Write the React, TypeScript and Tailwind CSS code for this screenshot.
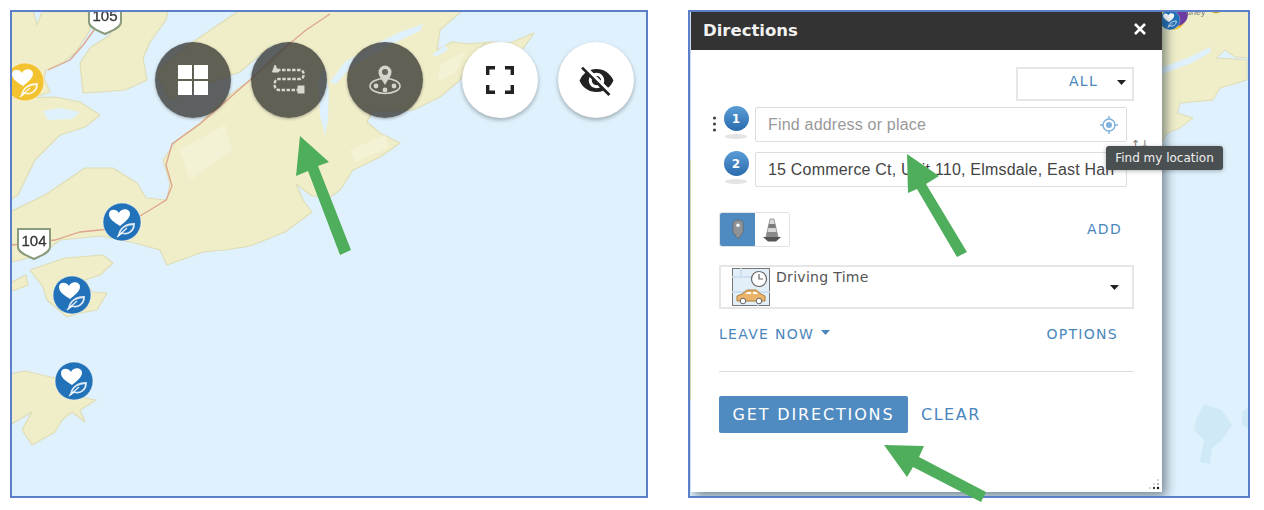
import { MdVisibilityOff } from "react-icons/md";

const LAND = "#f0eec9";
const COAST = "#dfddb6";
const WATER = "#dff1fc";

function Marker({ x, y, r = 19, fill = "#2272b9" }: { x: number; y: number; r?: number; fill?: string }) {
  return (
    <g transform={`translate(${x} ${y}) scale(${r / 19})`}>
      <circle r="19" fill={fill} stroke="#ffffff" strokeOpacity="0.5" strokeWidth="1" />
      <path d="M-2 4 C-8 0 -13 -3 -13 -8 C-13 -13 -6 -14 -3 -9 C-1 -14 8 -14 8 -8 C8 -4 3 0 -2 4 Z" fill="#ffffff" />
      <path d="M-3 13 C-2 6 4 2 12 2 C12 9 6 13 0 11 Z" fill="none" stroke="#ffffff" strokeOpacity="0.85" strokeWidth="1.8" />
      <path d="M-5 15 L5 6" stroke="#ffffff" strokeOpacity="0.85" strokeWidth="1.4" />
    </g>
  );
}

function Shield({ x, y, label }: { x: number; y: number; label: string }) {
  return (
    <g transform={`translate(${x} ${y})`}>
      <path d="M0 2 H32 V20 C32 26 22 29 16 32 C10 29 0 26 0 20 Z" fill="#ffffff" stroke="#8b9b7d" strokeWidth="2" />
      <text x="16" y="19" textAnchor="middle" fontSize="15" fontFamily="Liberation Sans, sans-serif" fill="#333333" stroke="#333333" strokeWidth="0.3">
        {label}
      </text>
    </g>
  );
}

function LeftMap() {
  return (
    <svg viewBox="12 12 634 484" className="absolute inset-0 h-full w-full blur-[0.7px]">
      <rect x="12" y="12" width="634" height="484" fill={WATER} />
      <g fill={LAND} stroke={COAST} strokeWidth="1.2" strokeLinejoin="round">
        <path d="M0 0 H30 L37 25 L42 12 H88 L90 30 L76 52 L64 62 L46 70 L44 78 L50 92 L32 98 L10 100 Z" />
        <path d="M120 10 H168 L166 20 L150 42 L143 58 L147 80 L125 90 L100 92 L83 93 L80 63 L90 48 L110 35 Z" />
        <path d="M10 98 L55 97 L80 102 L100 115 L85 127 L60 135 L35 160 L18 195 L10 200 Z" />
        <path d="M10 212 L45 195 L85 168 L113 168 L137 183 L146 198 L167 200 L170 183 L163 160 L177 140 L200 123 L227 97 L250 80 L276 58 L290 42 L270 46 L240 72 L205 84 L170 100 L160 80 L158 70 L190 44 L240 10 H463 L440 30 L437 50 L452 42 L470 44 L490 42 L510 43 L534 33 L522 50 L484 44 L470 60 L460 80 L440 97 L413 110 L395 111 L372 112 L367 122 L380 133 L400 143 L380 157 L353 170 L340 190 L330 197 L312 196 L296 184 L303 200 L312 212 L285 232 L250 246 L225 250 L203 252 L167 265 L160 250 L135 243 L100 236 L60 240 L40 255 L12 262 Z" />
        <path d="M30 270 L65 258 L103 255 L113 263 L100 275 L85 280 L92 292 L107 293 L97 310 L80 313 L67 317 L47 300 L43 287 Z" />
        <path d="M10 374 L25 371 L55 378 L73 381 L85 398 L96 400 L80 410 L85 422 L72 412 L62 420 L55 432 L32 445 L22 430 L32 412 L10 425 Z" />
        <path d="M10 283 L26 275 L28 285 L10 292 Z" />
      </g>
      <g fill={WATER} stroke="none">
        <path d="M43 111 L60 108 L80 112 L72 119 L48 120 Z" />
        <path d="M318 80 L325 68 L329 90 L328 120 L325 136 L320 115 Z" />
        <path d="M330 82 L345 62 L372 46 L400 32 L423 24 L420 31 L396 42 L375 54 L350 68 L336 84 Z" />
        <path d="M432 55 L445 45 L448 50 L437 56 Z" />
      </g>
      <g fill="#f4f2d4" stroke="none">
        <path d="M180 150 L225 125 L232 150 L190 180 Z" />
        <path d="M350 150 L385 135 L388 148 L355 162 Z" />
        <path d="M440 65 L465 52 L456 72 L438 82 Z" />
      </g>
      <path
        d="M94 30 L84 44 L70 60 L48 70 M330 14 L306 30 L282 50 L250 80 L200 124 L172 144 L166 165 L172 186 L166 200 L150 210 L120 228 L80 232 L55 240 L12 245"
        fill="none"
        stroke="#dda58c"
        strokeWidth="1.3"
      />
      <Marker x={25} y={82} fill="#f3c22f" />
      <Marker x={122} y={222} />
      <Marker x={72} y={295} />
      <Marker x={74} y={381} />
      <Shield x={89} y={2} label="105" />
      <Shield x={18} y={227} label="104" />
    </svg>
  );
}

function RightMap() {
  return (
    <svg viewBox="690 12 558 484" className="absolute inset-0 h-full w-full blur-[0.7px]">
      <rect x="690" y="12" width="558" height="484" fill={WATER} />
      <path d="M690 160 H692 V400 H690 Z" fill={LAND} />
      <path
        d="M1155 10 H1250 V58 L1235 57 L1225 50 L1216 58 L1247 60 L1247 80 L1220 88 L1213 100 L1180 103 L1177 113 L1193 118 L1180 128 L1167 133 L1160 145 Z"
        fill={LAND}
        stroke={COAST}
        strokeLinejoin="round"
      />
      <path d="M1160 68 L1190 57 L1210 47 L1211 52 L1192 63 L1162 74 Z" fill={WATER} />
      <path d="M1196 420 L1204 404 L1222 410 L1232 425 L1222 440 L1212 448 L1210 464 L1200 462 L1204 440 L1194 430 Z" fill="#cfe9f6" />
      <path d="M1242 412 L1250 406 V430 L1242 425 Z" fill="#cfe9f6" />
      <circle cx="1172" cy="16" r="14" fill="#f3c22f" />
      <circle cx="1176" cy="14" r="12" fill="#6d3aa0" />
      <Marker x={1170} y={20} r={10} />
      <circle cx="1216" cy="4" r="9" fill="#2272b9" stroke="#f3c22f" />
      <text x="1186" y="15" fontSize="9" fontFamily="Liberation Sans, sans-serif" fill="#777777">
        dney
      </text>
    </svg>
  );
}

function GridIcon() {
  return (
    <div className="grid grid-cols-2 gap-[2px]">
      <div className="h-[14px] w-[14px] bg-white" />
      <div className="h-[14px] w-[14px] bg-white" />
      <div className="h-[14px] w-[14px] bg-white" />
      <div className="h-[14px] w-[14px] bg-white" />
    </div>
  );
}

function RouteIcon() {
  return (
    <svg width="34" height="30" viewBox="0 0 34 30" fill="none" stroke="#d9d8d0" strokeWidth="2.4" strokeDasharray="3.5 1.5">
      <path d="M5 5 H28 C33 5 33 14 28 14 H7 C1 14 1 25 7 25 H27" />
      <path d="M3 0 L6.5 7 H0.5 Z" fill="#d9d8d0" strokeDasharray="none" strokeWidth="1" />
      <rect x="26" y="21" width="6" height="7" fill="#d9d8d0" strokeDasharray="none" strokeWidth="1" />
    </svg>
  );
}

function NearbyIcon() {
  return (
    <svg width="34" height="30" viewBox="0 0 34 30" fill="none" stroke="#d5d4cc" strokeWidth="1.6">
      <ellipse cx="17" cy="21" rx="15" ry="7.5" />
      <path d="M17 20 C13 13 10.5 11 10.5 7 A6.5 6.5 0 0 1 23.5 7 C23.5 11 21 13 17 20 Z" fill="#d5d4cc" stroke="none" />
      <circle cx="17" cy="7" r="3" fill="#66665a" stroke="none" />
      <circle cx="8" cy="21" r="1.6" fill="#d5d4cc" />
      <circle cx="17" cy="25" r="1.6" fill="#d5d4cc" />
      <circle cx="26" cy="21" r="1.6" fill="#d5d4cc" />
    </svg>
  );
}

function FullscreenIcon() {
  return (
    <svg width="28" height="28" viewBox="0 0 28 28" fill="none" stroke="#222222" strokeWidth="3.4">
      <path d="M1.7 9 V1.7 H9 M19 1.7 H26.3 V9 M1.7 19 V26.3 H9 M19 26.3 H26.3 V19" />
    </svg>
  );
}

function MapButtons() {
  const dark = "flex h-[76px] w-[76px] items-center justify-center rounded-full bg-[#3c3c38]/80 shadow-[0_1px_3px_rgba(0,0,0,0.3)]";
  const light = "flex h-[76px] w-[76px] items-center justify-center rounded-full bg-white shadow-[0_2px_4px_rgba(0,0,0,0.3)]";
  return (
    <div className="absolute left-[143px] top-[30px] flex gap-[20px]">
      <div className={dark}>
        <GridIcon />
      </div>
      <div className={dark}>
        <RouteIcon />
      </div>
      <div className={dark}>
        <NearbyIcon />
      </div>
      <div className={`${light} ml-[19px]`}>
        <FullscreenIcon />
      </div>
      <div className={light}>
        <MdVisibilityOff size={37} color="#222222" />
      </div>
    </div>
  );
}

function StopBadge({ n }: { n: number }) {
  return (
    <div className="mt-[-1px] flex flex-col items-center">
      <div className="flex h-[25px] w-[25px] items-center justify-center rounded-full bg-gradient-to-b from-[#5a9dd6] to-[#2a6cad] font-['DejaVu_Sans',sans-serif] text-[12px] font-bold text-white">
        {n}
      </div>
      <div className="mt-[3px] h-[5px] w-[22px] rounded-[50%] bg-[#e4e4e4]" />
    </div>
  );
}

function PinIcon() {
  return (
    <svg width="12" height="21" viewBox="0 0 14 24">
      <path d="M7 23 L1 15 V6 C1 2 4 1 7 1 C10 1 13 2 13 6 V15 Z" fill="#8f9396" stroke="#63686c" />
      <circle cx="7" cy="7" r="2" fill="#ffffff" />
    </svg>
  );
}

function ConeIcon() {
  return (
    <svg width="20" height="24" viewBox="0 0 20 24">
      <path d="M8 1 H12 L16 19 H4 Z" fill="#d8d8d8" stroke="#8a8a8a" strokeWidth="0.8" />
      <path d="M7 6 H13 L14 10 H6 Z" fill="#7a7a7a" />
      <path d="M5.2 14 H14.8 L16 19 H4 Z" fill="#8a8a8a" />
      <path d="M1 19 H19 L14 23.5 H6 Z" fill="#555555" />
    </svg>
  );
}

function DrivingIcon() {
  return (
    <svg width="38" height="38" viewBox="0 0 38 38">
      <rect x="0.5" y="0.5" width="37" height="37" fill="#e2eff9" stroke="#777777" />
      <path d="M0 9 H20 M9 0 V9 M0 24 H38 M26 24 V38" stroke="#c5dcee" strokeWidth="1.5" />
      <circle cx="27" cy="11" r="7.5" fill="#ffffff" stroke="#666666" strokeWidth="1.2" />
      <path d="M27 6 V11 H31" fill="none" stroke="#666666" strokeWidth="1.2" />
      <path d="M5 33 V28 L10 26 L15 22 H24 L29 26 L33 28 V33 Z" fill="#eab56a" stroke="#b07f3e" />
      <path d="M16 24 H19 V26 H13 Z M21 24 H24 L26 26 H21 Z" fill="#ffffff" />
      <circle cx="11" cy="33" r="2.8" fill="#ffffff" stroke="#666666" />
      <circle cx="27" cy="33" r="2.8" fill="#ffffff" stroke="#666666" />
    </svg>
  );
}

function Caret({ color = "#222222" }: { color?: string }) {
  return (
    <svg width="9" height="5" viewBox="0 0 9 5">
      <path d="M0 0 H9 L4.5 5 Z" fill={color} />
    </svg>
  );
}

function DirectionsPanel() {
  const label = "font-['DejaVu_Sans',sans-serif] text-[14px] tracking-[1.3px] text-[#4a86bb]";
  const input = "flex h-[35px] w-[372px] items-center rounded-[2px] border border-[#dddddd] bg-white pl-[12px] pr-[11px] font-['Liberation_Sans',sans-serif] text-[16px] tracking-[0.2px]";
  return (
    <div className="absolute left-[1px] top-0 flex h-[480px] w-[471px] flex-col bg-white shadow-[4px_4px_10px_rgba(30,50,60,0.55)]">
      <div className="flex h-[38px] items-center justify-between bg-[#333333] pl-[12px] pr-[16px]">
        <span className="font-['DejaVu_Sans',sans-serif] text-[16.5px] font-bold text-[#f2f2f2]">Directions</span>
        <svg className="mb-[4px]" width="12" height="12" viewBox="0 0 12 12" stroke="#ffffff" strokeWidth="2.6">
          <path d="M1 1 L11 11 M11 1 L1 11" />
        </svg>
      </div>

      <div className="flex flex-1 flex-col pl-[28px] pr-[28px]">
        <div className="mt-[17px] flex justify-end">
          <div className="flex h-[34px] w-[118px] items-start justify-end border-2 border-[#e6e6e6] pr-[6px] pt-[2px]">
            <span className={label}>ALL</span>
            <span className="ml-[19px] mt-[9px]">
              <Caret />
            </span>
          </div>
        </div>

        {/* Stops */}
        <div className="mt-[6px] flex">
          <div className="relative ml-[-8px] flex w-[44px] justify-center pl-[6px]">
            <svg className="absolute left-[1px] top-[9px]" width="5" height="16" viewBox="0 0 5 16" fill="#444444">
              <circle cx="2.5" cy="2" r="1.6" />
              <circle cx="2.5" cy="8" r="1.6" />
              <circle cx="2.5" cy="14" r="1.6" />
            </svg>
            <StopBadge n={1} />
          </div>
          <div className={input + " justify-between text-[#999999]"}>
            <span>Find address or place</span>
            <svg width="18" height="18" viewBox="0 0 18 18" fill="none" stroke="#7fb2dc" strokeWidth="1.5" className="mr-[-3px]">
              <circle cx="9" cy="9" r="6" />
              <circle cx="9" cy="9" r="3" fill="#7fb2dc" stroke="none" />
              <path d="M9 0 V3 M9 15 V18 M0 9 H3 M15 9 H18" />
            </svg>
          </div>
        </div>
        <div className="mt-[10px] flex">
          <div className="ml-[-8px] flex w-[44px] justify-center pl-[6px]">
            <StopBadge n={2} />
          </div>
          <div className={input + " text-[#444444]"}>
            <span className="overflow-hidden whitespace-nowrap">15 Commerce Ct, Unit 110, Elmsdale, East Hants</span>
          </div>
        </div>

        {/* Travel mode */}
        <div className="mt-[25px] flex h-[35px] items-center justify-between pr-[12px]">
          <div className="flex h-[35px] rounded-[2px] border border-[#e3e3e3]">
            <div className="flex w-[35px] items-center justify-center rounded-l-[2px] bg-[#4f8bc0]">
              <PinIcon />
            </div>
            <div className="flex w-[34px] items-center justify-center bg-white">
              <ConeIcon />
            </div>
          </div>
          <span className={label}>ADD</span>
        </div>

        <div className="mt-[18px] flex h-[44px] items-start border-2 border-[#e6e6e6] pl-[11px] pt-[1px]">
          <DrivingIcon />
          <span className="ml-[6px] mt-[-1px] font-['DejaVu_Sans',sans-serif] text-[14px] tracking-[0.3px] text-[#555555]">Driving Time</span>
          <span className="ml-auto mr-[13px] mt-[17px]">
            <Caret />
          </span>
        </div>

        <div className="mt-[15px] flex h-[20px] items-center justify-between pr-[16px]">
          <div className="flex items-center">
            <span className={label}>LEAVE NOW</span>
            <span className="ml-[7px] mt-[-4px]">
              <Caret color="#4a86bb" />
            </span>
          </div>
          <span className={label}>OPTIONS</span>
        </div>

        <div className="mt-[27px] h-px bg-[#dddddd]" />

        <div className="mt-[24px] flex items-center">
          <div className="flex h-[37px] w-[189px] items-center justify-center rounded-[2px] bg-[#4f8bc0] font-['DejaVu_Sans',sans-serif] text-[16px] tracking-[1.85px] text-white">
            GET DIRECTIONS
          </div>
          <span className="ml-[13px] font-['DejaVu_Sans',sans-serif] text-[16px] tracking-[1.5px] text-[#4a86bb]">CLEAR</span>
        </div>
      </div>

      {/* Swap arrows, half hidden by the tooltip */}
      <span className="absolute left-[440px] top-[125px] font-['DejaVu_Sans',sans-serif] text-[11px] text-[#777777]">↑↓</span>

      {/* Tooltip */}
      <div className="absolute left-[415px] top-[134px] flex h-[24px] w-[117px] items-center justify-center rounded-[3px] bg-[#4a5052] font-['DejaVu_Sans',sans-serif] text-[12px] text-[#eeeeee] shadow-[0_1px_4px_rgba(0,0,0,0.3)]">
        Find my location
      </div>

      {/* Resize handle */}
      <svg className="absolute bottom-[2px] right-[2px]" width="12" height="12" viewBox="0 0 12 12">
        <circle cx="10" cy="2" r="1" fill="#cccccc" />
        <circle cx="6" cy="6" r="1" fill="#cccccc" />
        <circle cx="10" cy="6" r="1" fill="#999999" />
        <circle cx="2" cy="10" r="1" fill="#cccccc" />
        <circle cx="6" cy="10" r="1.2" fill="#444444" />
        <circle cx="10" cy="10" r="1.2" fill="#111111" />
      </svg>
    </div>
  );
}

function Arrows() {
  return (
    <svg className="pointer-events-none absolute inset-0" width="1264" height="510" viewBox="0 0 1264 510" fill="#4fae5c">
      <polygon points="300,136 329,162 318,166 351,250 340,255 308,171 296,176" />
      <polygon points="907,154 939,176 926,184 967,252 957,257 917,189 908,193" />
      <polygon points="884,445 924,446 919,457 986,492 981,502 913,467 907,477" />
    </svg>
  );
}

export default function App() {
  return (
    <div className="relative flex h-[510px] w-[1264px] items-start gap-[40px] overflow-hidden bg-white pl-[10px] pt-[10px]">
      <div className="relative h-[488px] w-[638px] overflow-hidden border-2 border-[#5b7fc9]">
        <LeftMap />
        <MapButtons />
      </div>
      <div className="relative h-[488px] w-[562px] overflow-hidden border-2 border-[#5b7fc9]">
        <RightMap />
      </div>
      {/* Panel sits over the right map, clipped to its inner edge */}
      <div className="absolute left-[690px] top-[12px] h-[484px] w-[558px] overflow-hidden">
        <DirectionsPanel />
      </div>
      <Arrows />
    </div>
  );
}
